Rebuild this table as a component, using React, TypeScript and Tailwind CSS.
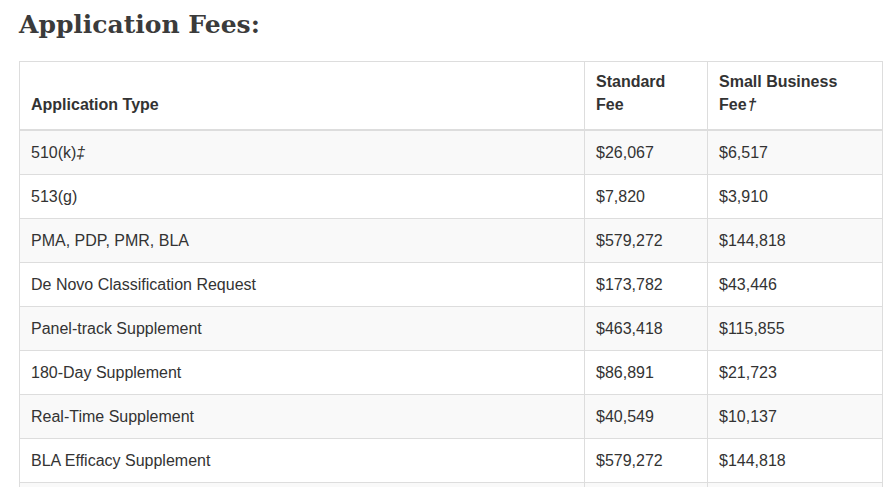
import React from 'react';

const rows: [string, string, string][] = [
  ['510(k)‡', '$26,067', '$6,517'],
  ['513(g)', '$7,820', '$3,910'],
  ['PMA, PDP, PMR, BLA', '$579,272', '$144,818'],
  ['De Novo Classification Request', '$173,782', '$43,446'],
  ['Panel-track Supplement', '$463,418', '$115,855'],
  ['180-Day Supplement', '$86,891', '$21,723'],
  ['Real-Time Supplement', '$40,549', '$10,137'],
  ['BLA Efficacy Supplement', '$579,272', '$144,818'],
  ['', '', ''],
];

const App: React.FC = () => {
  return (
    <div className="bg-white px-[19px] pt-[7px] text-[#333]" style={{ fontFamily: '"Liberation Sans", Arial, sans-serif' }}>
      <h2 className="mb-[18px] text-[25px] font-bold leading-[36px] text-[#3b3b3b]" style={{ fontFamily: '"DejaVu Serif", "Liberation Serif", serif' }}>
        Application Fees:
      </h2>
      <table className="w-[864px] border-collapse border border-[#ddd] text-[16px] leading-[23px]">
        <thead>
          <tr>
            <th className="border border-b-2 border-[#ddd] px-[11px] pb-[13px] pt-[8px] text-left align-bottom font-bold">Application Type</th>
            <th className="w-[123px] border border-b-2 border-[#ddd] px-[11px] pb-[13px] pt-[8px] text-left align-bottom font-bold">Standard Fee</th>
            <th className="w-[175px] border border-b-2 border-[#ddd] px-[11px] pb-[13px] pt-[8px] text-left align-bottom font-bold">
              Small Business Fee<i className="pl-px">†</i>
            </th>
          </tr>
        </thead>
        <tbody>
          {rows.map((r, i) => (
            <tr key={i} className={i % 2 === 0 ? 'bg-[#f9f9f9]' : 'bg-white'}>
              {r.map((c, j) => (
                <td key={j} className="h-[44px] border border-[#ddd] px-[11px] py-[10px]">
                  {c.endsWith('‡') ? (
                    <>
                      {c.slice(0, -1)}
                      <i>‡</i>
                    </>
                  ) : (
                    c
                  )}
                </td>
              ))}
            </tr>
          ))}
        </tbody>
      </table>
    </div>
  );
};

export default App;
